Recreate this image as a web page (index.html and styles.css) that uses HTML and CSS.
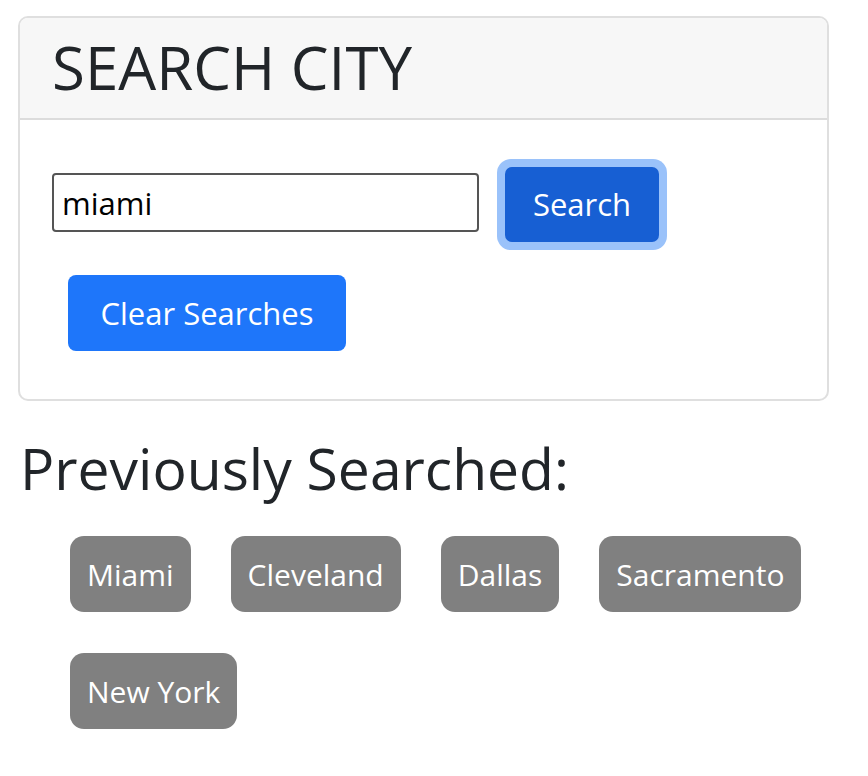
FILE: index.html
```html
<!DOCTYPE html>
<html>
<head>
<meta charset="utf-8">
<link rel="stylesheet" href="styles.css">
</head>
<body>
<div class="page">
  <div class="card">
    <div class="card-header">SEARCH CITY</div>
    <div class="card-body">
      <div class="search-row">
        <input class="city-input" type="text" value="miami">
        <span class="focus-ring"><button class="btn btn-search">Search</button></span>
      </div>
      <button class="btn btn-clear">Clear Searches</button>
    </div>
  </div>
  <h2 class="prev-title">Previously Searched:</h2>
  <div class="history">
    <span class="badge">Miami</span>
    <span class="badge">Cleveland</span>
    <span class="badge">Dallas</span>
    <span class="badge">Sacramento</span>
    <span class="badge">New York</span>
  </div>
</div>
</body>
</html>
```
FILE: styles.css
```css
* { box-sizing: border-box; }
html, body { margin: 0; padding: 0; background: #fff; }
body {
  font-family: "Open Sans", "Noto Sans", sans-serif;
  color: #212529;
}
.page {
  padding: 16px 39px 0 18px;
}
.card {
  border: 2px solid #dfdfdf;
  border-radius: 10px;
  overflow: hidden;
}
.card-header {
  background: #f7f7f7;
  border-bottom: 2px solid #dcdcdc;
  height: 102px;
  padding: 0 0 0 32px;
  font-size: 60px;
  line-height: 98px;
  color: #212529;
}
.card-body {
  padding: 39px 0 48px 32px;
}
.search-row {
  display: flex;
  align-items: center;
}
.city-input {
  width: 427px;
  height: 59px;
  border: 2px solid #555;
  border-radius: 4px;
  padding: 0 8px;
  font-family: "Open Sans", "Noto Sans", sans-serif;
  font-size: 31px;
  color: #000;
  outline: none;
  margin: 0 18px 4px 0;
}
.focus-ring {
  display: inline-block;
  padding: 8px;
  border-radius: 14px;
  background: #9ac2fa;
}
.btn {
  display: block;
  border: none;
  color: #fff;
  font-family: "Open Sans", "Noto Sans", sans-serif;
  font-size: 31px;
  height: 75px;
  border-radius: 8px;
  padding: 0;
  line-height: 75px;
}
.btn-search {
  width: 154px;
  background: #175fd3;
  border-radius: 7px;
}
.btn-clear {
  width: 278px;
  height: 76px;
  margin: 25px 0 0 16px;
  background: #1e76fa;
  border-radius: 8px;
}
.prev-title {
  margin: 27px 0 0 2px;
  font-weight: 400;
  font-size: 57px;
  line-height: 80px;
  color: #212529;
}
.history {
  display: flex;
  flex-wrap: wrap;
  gap: 41px 40px;
  padding: 28px 0 0 52px;
}
.badge {
  display: inline-flex;
  align-items: center;
  height: 76px;
  padding: 0 17px;
  background: #808080;
  color: #fff;
  font-size: 30px;
  border-radius: 14px;
}
```
